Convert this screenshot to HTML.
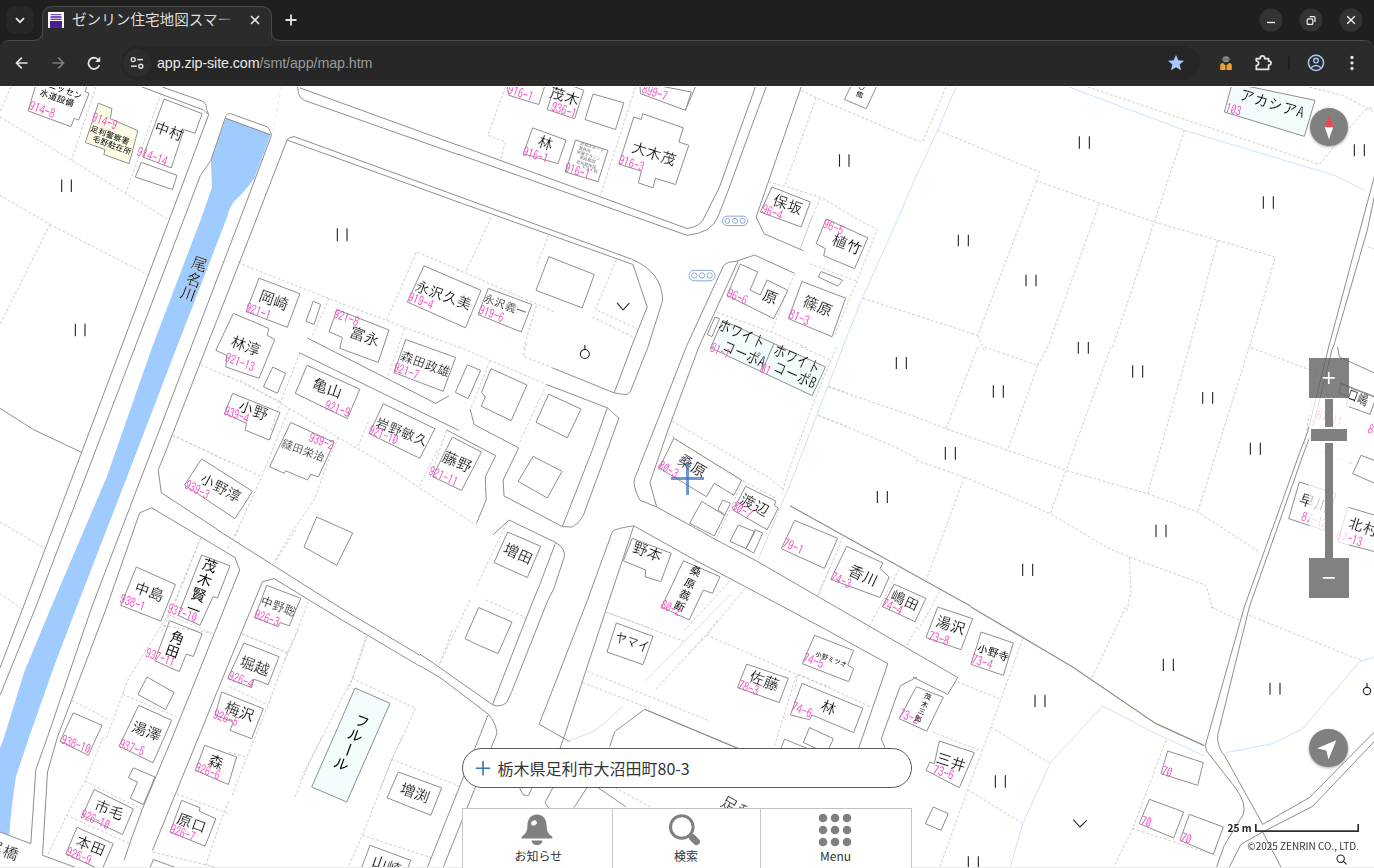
<!DOCTYPE html>
<html lang="ja">
<head>
<meta charset="utf-8">
<title>ゼンリン住宅地図スマートフォン</title>
<style>
html,body{margin:0;padding:0;}
body{width:1374px;height:868px;overflow:hidden;background:#fff;position:relative;font-family:"Liberation Sans","Noto Sans CJK JP",sans-serif;}
#chrome{position:absolute;left:0;top:0;width:1374px;height:86.3px;overflow:hidden;background:#1f1f1f;z-index:10;}
#toolbar{position:absolute;left:0;top:40px;width:1374px;height:47px;background:#2b2b2b;border-top-left-radius:9px;border-top-right-radius:9px;box-sizing:border-box;border-top:1px solid #4a4a4a;}
#tab{position:absolute;left:42px;top:6px;width:230px;height:35px;background:#2b2b2b;border-radius:10px 10px 0 0;box-sizing:border-box;border:1px solid #4a4a4a;border-bottom:none;}
#tabtitle{position:absolute;left:72px;top:10px;width:166px;height:22px;line-height:21px;font-size:14.6px;color:#dedede;white-space:nowrap;overflow:hidden;font-family:"Liberation Sans","Noto Sans CJK JP",sans-serif;}
#omni{position:absolute;left:121px;top:46px;width:1079px;height:34px;border-radius:17px;background:#262626;}
#url{position:absolute;left:157px;top:52px;height:22px;line-height:22px;font-size:14.3px;color:#e8e8e8;white-space:nowrap;letter-spacing:-0.1px;}
#url span{color:#9a9a9a;}
#map{position:absolute;left:0;top:87px;width:1374px;height:781px;overflow:hidden;background:#fff;}
#map svg{position:absolute;left:0;top:0;will-change:transform;}
.b{fill:none;stroke:#8e8e8e;stroke-width:1;vector-effect:non-scaling-stroke;stroke-linejoin:miter;}
.r{fill:none;stroke:#8e8e8e;stroke-width:1;vector-effect:non-scaling-stroke;}
.d{fill:none;stroke:#c4c4c4;stroke-width:0.85;stroke-dasharray:2.8 1.9;vector-effect:non-scaling-stroke;}
.w{fill:none;stroke:#cbe2fb;stroke-width:1;vector-effect:non-scaling-stroke;}
.n,.l{text-anchor:middle;dominant-baseline:central;}
.n{fill:#000;stroke:#fff;stroke-width:0.2;vector-effect:non-scaling-stroke;font-family:"IPAGothic","Noto Sans CJK JP",sans-serif;font-weight:normal;}
.l{fill:#f455c8;font-family:"IPAGothic","Liberation Sans",sans-serif;}
.f{stroke:#222;stroke-width:1.1;vector-effect:non-scaling-stroke;fill:none;}
.ui{position:absolute;z-index:5;}
</style>
</head>
<body>
<!--CHROME-->
<div id="chrome">
<div id="toolbar"></div>
<div id="tab"></div>
<div id="omni"></div>
<div id="tabtitle">ゼンリン住宅地図スマートフォン</div>
<div id="url">app.zip-site.com<span>/smt/app/map.htm</span></div>
<svg width="1374" height="87" style="position:absolute;left:0;top:0">
<!--CHROMEICONS-->
<!-- tab flare corners -->
<path d="M33 40.5 Q42.5 40.5 42.5 31 L42.5 41 Z" fill="#2b2b2b"/>
<path d="M33 40.5 Q42.5 40.5 42.5 31" fill="none" stroke="#4a4a4a" stroke-width="1"/>
<path d="M281 40.5 Q271.5 40.5 271.5 31 L271.5 41 Z" fill="#2b2b2b"/>
<path d="M281 40.5 Q271.5 40.5 271.5 31" fill="none" stroke="#4a4a4a" stroke-width="1"/>
<rect x="43" y="39" width="228" height="3" fill="#2b2b2b"/>
<!-- tab search button -->
<rect x="6.5" y="6.5" width="27" height="27" rx="8" fill="#272727"/>
<path d="M16 18.2 L20 22.2 L24 18.2" fill="none" stroke="#e6e6e6" stroke-width="1.8"/>
<!-- favicon -->
<rect x="48" y="12" width="16" height="16" fill="#fff"/>
<rect x="50" y="21" width="12" height="7" fill="#4a1d96"/>
<rect x="50.5" y="14" width="11" height="1.2" fill="#7a4fc0"/>
<rect x="50.5" y="16.2" width="11" height="1.6" fill="#5b2fa8"/>
<rect x="50.5" y="18.6" width="11" height="1.4" fill="#6a3fb4"/>
<!-- tab title fade -->
<defs><linearGradient id="fade" x1="0" x2="1" y1="0" y2="0"><stop offset="0" stop-color="#2b2b2b" stop-opacity="0"/><stop offset="1" stop-color="#2b2b2b" stop-opacity="1"/></linearGradient></defs>
<rect x="212" y="9" width="25" height="24" fill="url(#fade)"/><rect x="236.5" y="9" width="6" height="24" fill="#2b2b2b"/>
<!-- tab close -->
<path d="M251 16 L259 24 M259 16 L251 24" stroke="#e3e3e3" stroke-width="1.6" fill="none"/>
<!-- new tab -->
<path d="M285.5 20 H296.5 M291 14.5 V25.5" stroke="#e3e3e3" stroke-width="1.8" fill="none"/>
<!-- window controls -->
<circle cx="1271" cy="20" r="11.5" fill="#333"/>
<circle cx="1311" cy="20" r="11.5" fill="#333"/>
<circle cx="1351" cy="20" r="11.5" fill="#333"/>
<path d="M1267 22.5 H1275" stroke="#f0f0f0" stroke-width="1.3"/>
<rect x="1307.2" y="18.8" width="5.6" height="5.6" rx="1" fill="none" stroke="#f0f0f0" stroke-width="1.2"/>
<path d="M1309.6 16.6 H1313.8 Q1315 16.6 1315 17.8 V22" fill="none" stroke="#f0f0f0" stroke-width="1.2"/>
<path d="M1347.2 16.2 L1354.8 23.8 M1354.8 16.2 L1347.2 23.8" stroke="#f0f0f0" stroke-width="1.4"/>
<!-- nav -->
<path d="M27.6 63 H17 M21.8 57.7 L16.5 63 L21.8 68.3" fill="none" stroke="#e3e3e3" stroke-width="1.7"/>
<path d="M52.4 63 H63 M58.2 57.7 L63.5 63 L58.2 68.3" fill="none" stroke="#7b7b7b" stroke-width="1.7"/>
<path d="M99.3 61.5 A5.6 5.6 0 1 0 99.3 65.2" fill="none" stroke="#e3e3e3" stroke-width="1.8"/>
<path d="M100.2 56.8 V62 H95 Z" fill="#e3e3e3"/>
<!-- site info -->
<circle cx="137" cy="63" r="14" fill="#2d2d2d"/>
<circle cx="133.2" cy="59.6" r="2" fill="none" stroke="#e3e3e3" stroke-width="1.4"/>
<path d="M137.2 59.6 H143" stroke="#e3e3e3" stroke-width="1.5"/>
<circle cx="140.8" cy="66.2" r="2" fill="none" stroke="#e3e3e3" stroke-width="1.4"/>
<path d="M131 66.2 H136.8" stroke="#e3e3e3" stroke-width="1.5"/>
<!-- star -->
<path d="M1176 55 L1178.3 60.3 L1184 60.8 L1179.7 64.6 L1181 70.2 L1176 67.2 L1171 70.2 L1172.3 64.6 L1168 60.8 L1173.7 60.3 Z" fill="#a8c7fa"/>
<!-- extension icon (agent) -->
<ellipse cx="1226" cy="59.2" rx="3.4" ry="3" fill="#8a8a8a"/>
<rect x="1221.8" y="58.6" width="8.4" height="1.4" fill="#6f6f6f"/>
<path d="M1220.2 70 V65.5 Q1220.2 63 1223 63 L1226 66 L1229 63 Q1231.8 63 1231.8 65.5 V70 Z" fill="#f0a030"/>
<path d="M1226 66 V70" stroke="#2b2b2b" stroke-width="1"/>
<!-- puzzle -->
<path d="M1256.3 58.6 H1260.2 V58 A2.2 2.2 0 0 1 1264.6 58 V58.6 H1268.6 V61.2 H1269.2 A1.9 1.9 0 0 1 1269.2 65 H1268.6 V69.4 H1256.3 V65.6 A2.3 2.3 0 0 0 1256.3 61 Z" fill="none" stroke="#e9e9e9" stroke-width="1.7" stroke-linejoin="round"/>
<!-- separator -->
<path d="M1289 55.5 V70.5" stroke="#1a1a1a" stroke-width="1.2"/>
<!-- profile -->
<circle cx="1316" cy="62.8" r="7.6" fill="none" stroke="#a8c7fa" stroke-width="1.5"/>
<circle cx="1316" cy="60.6" r="2.3" fill="none" stroke="#a8c7fa" stroke-width="1.4"/>
<path d="M1310.8 68 Q1316 63.2 1321.2 68" fill="none" stroke="#a8c7fa" stroke-width="1.4"/>
<!-- menu dots -->
<circle cx="1352" cy="57.4" r="1.6" fill="#e9e9e9"/><circle cx="1352" cy="62.9" r="1.6" fill="#e9e9e9"/><circle cx="1352" cy="68.4" r="1.6" fill="#e9e9e9"/>
<!--/CHROMEICONS-->
</svg>
</div>
<!--MAP-->
<div id="map">
<svg width="1374" height="781" viewBox="0 87 1374 781">
<!--GLOBAL-->
<!-- river -->
<path d="M225.9 117.7 L270.8 134.6 L254.3 178.4 Q244 192 236 199.5 Q229.5 206 227.2 217 L176.9 347 L127 477 L76.7 607 L55 663.7 L29.2 737 L15.8 777 Q11 810 9.2 835.3 L0 832 L0 748 L4.2 737 L24.2 672 L51.2 607 L106.7 477 L152.2 347 L201.7 217 L212 187 L210.9 160.4 Z" fill="#a0cbfe"/>
<!-- river bank lines -->
<path class="r" d="M142 87 L203.5 110 L208.7 114.7 L170.3 217 L23.3 607 L0 667.8"/>
<path class="r" d="M162.2 87 L203.4 101.5 Q206.6 104 206.7 109.5 L208.7 114.7"/>
<path class="r" d="M225.9 116 L210.9 160.4 L200.4 175.4 L184.7 217 L35.8 607 L0 695.3"/>
<path class="r" d="M240.8 217 L91.8 607 L47.5 737 L35.8 769.5 L30.8 843.7 L0 832"/>
<path class="r" d="M257.2 217 L164.2 455.3 L158.3 469.5 L159.2 477 L161.3 492.8 L218.3 530"/>
<path class="r" d="M235 557.5 L151.7 507.8 L139.7 512.8 L106.7 607 L57.5 737 L47.5 772 L42.5 855.3 L110 880"/>
<path class="r" d="M240.8 217 L271.5 135.3"/>
<path class="r" d="M257.2 217 L287 140"/>
<g class="n" font-size="16">
<text transform="translate(201.3,258.7) rotate(20)" text-anchor="middle" dy="5.5">尾</text>
<text transform="translate(195.8,274.5) rotate(20)" text-anchor="middle" dy="5.5">名</text>
<text transform="translate(190.3,288.7) rotate(20)" text-anchor="middle" dy="5.5">川</text>
</g>
<!--/GLOBAL-->
<!--T00-->
<g transform="translate(0,87) scale(0.166667)">
<path class="d" d="M0 180 L430 440 L755 640 L1010 795"/>
<path class="d" d="M65 0 L0 150"/>
<path class="d" d="M575 0 L430 440"/>
<path class="d" d="M965 40 L755 640"/>
<path class="d" d="M0 650 L300 825"/>
<polygon class="b" points="215,-10 168,143 425,238 445,188 472,198 535,38 512,28 522,-10"/>
<polygon class="b" style="fill:#fdfde6" points="590,97 672,130 662,190 827,262 775,460 623,405 630,375 512,333"/>
<polygon class="b" points="985,72 1213,160 1170,278 1103,255 1028,485 857,420"/>
<polygon class="b" points="848,452 1062,530 1035,615 812,540"/>
<text class="n" style="stroke:none" font-size="54" transform="translate(392,20) rotate(20)">ニッセン</text>
<text class="n" style="stroke:none" font-size="54" transform="translate(343,64) rotate(20)">水道設備</text>
<text class="l" font-size="78" transform="translate(252,137) rotate(20)" textLength="161" lengthAdjust="spacingAndGlyphs">914-8</text>
<text class="l" font-size="78" transform="translate(627,207) rotate(20)" textLength="155" lengthAdjust="spacingAndGlyphs">914-9</text>
<text class="n" style="stroke:none" font-size="49" transform="translate(660,288) rotate(20)">足利警察署</text>
<text class="n" style="stroke:none" font-size="49" transform="translate(672,348) rotate(20)">毛野駐在所</text>
<text class="n" font-size="92" transform="translate(1015,265) rotate(20)">中村</text>
<text class="l" font-size="78" transform="translate(913,418) rotate(20)" textLength="189" lengthAdjust="spacingAndGlyphs">914-14</text>
<path class="f" d="M370 555 V630 M428 555 V630"/>
</g>
<g transform="translate(229,87) scale(0.166667)">
<path class="r" d="M410 -5 L418 40 Q425 68 452 80 L1380 407"/>
<path class="r" d="M425 5 L1380 352"/>
<path class="r" d="M348 318 Q352 305 390 297 L1380 657"/>
<path class="r" d="M348 318 L1380 692"/>
<path class="r" d="M-20 188 L250 287"/>
<path class="r" d="M-19 172 L-10 162 L10 160 L232 240 Q242 247 255 287"/>
<path class="w" style="stroke:#dcebfc" stroke-dasharray="4 3" d="M315 0 L262 270"/>
</g>
<!--/T00-->
<!--T10-->
<g transform="translate(458,87) scale(0.166667)">
<path class="r" d="M0 348 L1374 849"/>
<path class="r" d="M0 403 L1374 890"/>
<path class="d" d="M285 0 L180 290 L285 330 L255 435"/>
<path class="d" d="M1065 0 L855 650"/>
<polygon class="b" points="290,-30 305,50 485,105 525,-20"/>
<polygon class="b" points="585,-20 535,135 700,190 755,20 690,-5"/>
<polygon class="b" points="810,42 995,95 945,255 762,195"/>
<polygon class="b" points="448,245 648,318 600,460 392,400"/>
<polygon class="b" points="705,318 900,380 840,568 645,510"/>
<polygon class="b" points="1055,180 1100,195 1108,160 1352,245 1325,330 1385,350 1305,585 1185,548 1170,605 1082,575 1100,505 965,462"/>
<polygon class="b" points="1090,-30 1095,40 1365,140 1400,30"/>
<text class="l" font-size="78" transform="translate(375,38) rotate(18)" textLength="155" lengthAdjust="spacingAndGlyphs">916-1</text>
<text class="n" font-size="92" transform="translate(640,55) rotate(18)">茂木</text>
<text class="l" font-size="78" transform="translate(635,140) rotate(18)" textLength="155" lengthAdjust="spacingAndGlyphs">936-1</text>
<text class="n" font-size="92" transform="translate(525,335) rotate(18)">林</text>
<text class="l" font-size="78" transform="translate(465,410) rotate(18)" textLength="155" lengthAdjust="spacingAndGlyphs">916-1</text>
<g class="n" font-size="25" style="fill:#555">
<text transform="translate(805,356) rotate(18)">足利スポーツ</text>
<text transform="translate(762,372) rotate(18)">整体院</text>
<text transform="translate(785,408) rotate(18)">学習マラソン</text>
<text transform="translate(778,432) rotate(18)">家庭教師</text>
<text transform="translate(770,462) rotate(18)">足利整体院</text>
<text transform="translate(790,490) rotate(18)">トライ個</text>
</g>
<text class="l" font-size="78" transform="translate(715,505) rotate(18)" textLength="155" lengthAdjust="spacingAndGlyphs">916-1</text>
<text class="n" font-size="92" transform="translate(1175,400) rotate(18)">大木茂</text>
<text class="l" font-size="78" transform="translate(1040,460) rotate(18)" textLength="155" lengthAdjust="spacingAndGlyphs">916-3</text>
<text class="l" font-size="78" transform="translate(1180,35) rotate(18)" textLength="155" lengthAdjust="spacingAndGlyphs">899-7</text>
</g>
<g transform="translate(458,217) scale(0.166667)">
<path class="r" d="M0 -125 L1040 252 Q1225 330 1228 500 L1140 780 L1035 1045 Q1020 1072 995 1065 L936 1055"/>
<path class="r" d="M0 -90 L1050 285 L1135 540 L1040 780 L960 995 L936 1055"/>
<path class="d" d="M200 0 L45 330"/>
<path class="d" d="M-10 317 L45 335 L575 568"/>
<path class="d" d="M545 105 L470 295"/>
<path class="d" d="M950 255 L825 555 L1075 670"/>
<path class="d" d="M805 600 L1050 720"/>
<path class="d" d="M470 530 L390 800"/>
<polygon class="b" points="545,238 818,345 745,545 468,440"/>
<polygon class="b" points="182,428 443,525 380,690 120,585"/>
<polygon class="b" points="-204,293 138,440 45,665 -304,510"/>
<path class="f" d="M955 515 L990 558 L1028 517"/>
<text class="n" font-size="68" transform="translate(285,528) rotate(20)">永沢義一</text>
<text class="l" font-size="78" transform="translate(200,582) rotate(20)" textLength="155" lengthAdjust="spacingAndGlyphs">919-6</text>
<text class="n" font-size="88" transform="translate(-87,468) rotate(20)">永沢久美</text>
</g>
<g transform="translate(687,87) scale(0.166667)">
<path class="r" d="M50 0 L-10 140"/>
<path class="r" d="M410 0 L195 600 L105 780 Q85 838 0 849"/>
<path class="r" d="M475 0 L335 380 L240 640 L185 780 Q150 875 0 890"/>
<path class="r" d="M685 0 L415 780 L462 880 L700 983"/>
<path class="d" d="M685 20 L775 65 L1380 322"/>
<path class="d" d="M775 65 L585 595"/>
<path class="d" d="M490 570 L585 595 L810 665 L1000 780 L1140 855 L1020 1165 L880 1500"/>
<path class="d" d="M800 665 L750 780 L680 970"/>
<polygon class="b" points="995,-30 945,75 1075,130 1145,-20"/>
<polygon class="b" points="510,600 740,690 685,840 440,750"/>
<path class="f" d="M915 403 V478 M972 403 V478"/>
<path class="w" d="M1380 520 L1270 780 L1050 1270 L935 1560"/>
<text class="n" style="stroke:none" font-size="42" transform="translate(1048,0) rotate(18)">〇</text>
<text class="n" style="stroke:none" font-size="42" transform="translate(1035,45) rotate(18)">館</text>
<text class="n" font-size="92" transform="translate(605,705) rotate(20)">保坂</text>
<text class="l" font-size="78" transform="translate(510,752) rotate(20)" textLength="128" lengthAdjust="spacingAndGlyphs">96-4</text>
</g>
<g transform="translate(687,217) scale(0.166667)">
<g fill="none" stroke="#8ea6d8" stroke-width="1" style="vector-effect:non-scaling-stroke">
<rect x="212" y="-5" width="153" height="56" rx="28" vector-effect="non-scaling-stroke"/>
<circle cx="242" cy="23" r="15" vector-effect="non-scaling-stroke"/><circle cx="288" cy="23" r="15" vector-effect="non-scaling-stroke"/><circle cx="334" cy="23" r="15" vector-effect="non-scaling-stroke"/>
<rect x="12" y="320" width="156" height="63" rx="31" vector-effect="non-scaling-stroke"/>
<circle cx="44" cy="351" r="16" vector-effect="non-scaling-stroke"/><circle cx="90" cy="351" r="16" vector-effect="non-scaling-stroke"/><circle cx="136" cy="351" r="16" vector-effect="non-scaling-stroke"/>
</g>
<path class="r" d="M-4 778 L218 295 Q228 278 250 272 L300 265 L405 228 L645 338"/>
<path class="r" d="M305 268 L71 780"/>
<path class="d" d="M750 0 L680 190"/>
<path class="d" d="M735 280 L1020 385"/>
<path class="d" d="M645 340 L505 690"/>
<path class="d" d="M180 572 L505 690 L720 785"/>
<path class="d" d="M1055 487 L1380 592"/>
<polygon class="b" points="320,283 425,330 378,438 440,468 480,378 605,440 520,610 240,470"/>
<polygon class="b" points="690,387 952,487 870,718 608,610"/>
<polygon class="b" points="805,327 935,380 905,415 788,360"/>
<polygon class="b" points="835,12 1085,125 1005,310 820,232 830,190 775,160"/>
<polygon class="b" points="168,600 195,610 150,718 122,705"/>
<text class="n" font-size="92" transform="translate(500,480) rotate(22)">原</text>
<text class="l" font-size="78" transform="translate(300,480) rotate(24)" textLength="128" lengthAdjust="spacingAndGlyphs">96-6</text>
<text class="n" font-size="92" transform="translate(785,535) rotate(22)">篠原</text>
<text class="l" font-size="78" transform="translate(672,605) rotate(22)" textLength="128" lengthAdjust="spacingAndGlyphs">81-3</text>
<text class="n" font-size="92" transform="translate(960,165) rotate(22)">植竹</text>
<text class="l" font-size="78" transform="translate(878,62) rotate(22)" textLength="128" lengthAdjust="spacingAndGlyphs">96-5</text>
</g>
<!--/T10-->
<!--T20-->
<g transform="translate(916,87) scale(0.333333)">
<path class="w" d="M120 0 L65 130 L0 270"/>
<path class="w" d="M460 0 L805 130 L1255 265 L1345 310"/>
<path class="d" d="M90 0 L20 165 L0 160"/>
<path class="d" d="M65 130 L370 255 L362 282 L715 405 L1078 510 L1000 780"/>
<path class="d" d="M362 282 L185 745 L0 685"/>
<path class="d" d="M185 745 L205 790"/>
<path class="d" d="M550 350 L395 780"/>
<path class="d" d="M805 130 L715 405 L590 780"/>
<path class="d" d="M905 460 L820 780"/>
<path class="d" d="M515 0 L1210 232 L1345 70 L1380 58"/>
<path class="d" d="M1180 0 L1280 25 L1380 78"/>
<path class="d" d="M1355 480 L1380 486"/>
<polygon class="b" style="fill:#f2fcfc" points="958,-10 1197,40 1165,148 925,75 948,-10"/>
<text class="n" font-size="46" transform="translate(1068,50) rotate(17)" textLength="200" lengthAdjust="spacingAndGlyphs">アカシアA</text>
<text class="l" font-size="39" transform="translate(952,68) rotate(17)" textLength="48" lengthAdjust="spacingAndGlyphs">103</text>
<path class="f" d="M490 148 V185 M520 148 V185 M1042 328 V365 M1072 328 V365 M1315 172 V208 M1345 172 V208 M127 443 V478 M157 443 V478 M330 563 V598 M360 563 V598 M487 765 V800 M517 765 V800"/>
<path class="r" d="M1380 250 L1238 780"/>
<path class="r" d="M1380 305 L1354 429 L1252 780"/>
</g>
<!--/T20-->
<!--T01-->
<g transform="translate(60,217) scale(0.166667)">
<path class="d" d="M-60 45 L525 345"/>
<path class="d" d="M-60 45 L-360 645"/>
<path class="f" d="M92 640 V715 M150 640 V715"/>
</g>
<g transform="translate(229,217) scale(0.166667)">
<path class="f" d="M650 68 V145 M708 68 V145"/>
<path class="d" d="M55 275 L600 490 L945 620 L1060 665 L1380 782"/>
<path class="d" d="M1380 317 L1125 210 L945 620"/>
<path class="d" d="M600 490 L495 725"/>
<polygon class="b" points="180,367 425,460 350,662 103,568"/>
<polygon class="b" points="505,505 550,525 510,645 462,625"/>
<text class="n" font-size="92" transform="translate(270,500) rotate(20)">岡崎</text>
<text class="l" font-size="78" transform="translate(1150,505) rotate(20)" textLength="155" lengthAdjust="spacingAndGlyphs">919-4</text>
<text class="l" font-size="78" transform="translate(175,568) rotate(20)" textLength="155" lengthAdjust="spacingAndGlyphs">921-1</text>
</g>
<g transform="translate(229,300) scale(0.166667)">
<polygon class="b" points="26,80 238,170 230,212 275,237 180,470 -19,402 -14,332 -79,302"/>
<polygon class="b" points="262,403 340,440 290,560 207,520"/>
<polygon class="b" points="648,58 960,180 895,375 665,290 680,225 600,190"/>
<polygon class="b" points="1060,237 1360,345 1285,548 990,435"/>
<polygon class="b" points="468,392 785,535 710,712 398,560"/>
<path class="r" d="M470 228 L1240 620 L1320 575"/>
<path class="r" d="M420 315 L1380 783"/>
<path class="d" d="M425 320 L310 610 L250 790"/>
<path class="d" d="M-10 455 L310 610"/>
<path class="d" d="M1055 170 L950 465"/>
<text class="n" font-size="92" transform="translate(100,275) rotate(20)">林淳</text>
<text class="l" font-size="78" transform="translate(65,375) rotate(20)" textLength="183" lengthAdjust="spacingAndGlyphs">921-13</text>
<text class="l" font-size="78" transform="translate(703,108) rotate(20)" textLength="155" lengthAdjust="spacingAndGlyphs">921-8</text>
<text class="n" font-size="92" transform="translate(815,220) rotate(20)">富永</text>
<text class="n" font-size="78" transform="translate(1178,385) rotate(20)">森田政雄</text>
<text class="l" font-size="78" transform="translate(1063,428) rotate(20)" textLength="155" lengthAdjust="spacingAndGlyphs">921-7</text>
<text class="n" font-size="92" transform="translate(590,530) rotate(20)">亀山</text>
<text class="l" font-size="78" transform="translate(650,655) rotate(20)" textLength="155" lengthAdjust="spacingAndGlyphs">921-9</text>
</g>
<g transform="translate(0,347) scale(0.166667)">
<path class="r" d="M0 368 L200 495 L495 635"/>
<path class="d" d="M1205 108 L1380 182"/>
<path class="d" d="M1035 528 L1380 692"/>
</g>
<g transform="translate(0,477) scale(0.166667)">
<path class="d" d="M0 270 L270 430"/>
<path class="d" d="M0 700 L130 790"/>
<path class="d" d="M1205 365 L1040 780"/>
<polygon class="b" points="818,540 1053,645 965,865 725,770"/>
<text class="n" font-size="92" transform="translate(895,688) rotate(20)">中島</text>
<text class="l" font-size="78" transform="translate(795,755) rotate(20)" textLength="155" lengthAdjust="spacingAndGlyphs">938-1</text>
</g>
<g transform="translate(160,400) scale(0.166667)">
<path class="d" d="M75 212 L610 460"/>
<path class="d" d="M775 50 L610 460 L465 780 L400 900"/>
<path class="d" d="M480 -120 L775 50 L1070 225 L1380 402"/>
<path class="d" d="M1070 225 L1010 360 L925 600 L800 780 L690 960"/>
<path class="d" d="M1250 130 L1185 285"/>
<polygon class="b" points="436,-40 720,75 655,240 510,180 520,140 388,80"/>
<polygon class="b" points="785,135 1045,255 950,462 905,445 885,480 755,425 745,440 657,400"/>
<polygon class="b" points="250,353 555,548 450,712 147,510"/>
<text class="n" font-size="92" transform="translate(560,62) rotate(20)">小野</text>
<text class="l" font-size="78" transform="translate(458,90) rotate(20)" textLength="155" lengthAdjust="spacingAndGlyphs">939-4</text>
<text class="n" font-size="68" transform="translate(860,300) rotate(20)">縫田栄治</text>
<text class="l" font-size="78" transform="translate(968,250) rotate(20)" textLength="155" lengthAdjust="spacingAndGlyphs">939-2</text>
<text class="n" font-size="88" transform="translate(365,525) rotate(28)">小野淳</text>
<text class="l" font-size="78" transform="translate(222,540) rotate(28)" textLength="155" lengthAdjust="spacingAndGlyphs">939-3</text>
</g>
<!--/T01-->
<!--T11-->
<g transform="translate(389,347) scale(0.166667)">
<path class="r" d="M487 372 L510 465 L778 605"/>
<path class="r" d="M980 125 L1350 275"/>
<path class="r" d="M945 225 L1310 365 L1380 428"/>
<path class="r" d="M1310 365 L1220 618"/>
<path class="r" d="M1380 425 L1310 618"/>
<path class="d" d="M420 0 L945 225"/>
<path class="d" d="M825 -20 L805 55 L980 125"/>
<path class="d" d="M605 85 L490 370"/>
<path class="d" d="M945 225 L775 590"/>
<path class="d" d="M345 500 L240 800"/>
<polygon class="b" points="470,107 550,140 475,310 398,272"/>
<polygon class="b" points="612,130 828,228 733,442 553,355 578,300 555,272"/>
<polygon class="b" points="958,283 1152,372 1070,545 882,452"/>
<polygon class="b" points="-34,340 275,490 185,668 -119,520"/>
<circle class="f" cx="1175" cy="42" r="27"/><path class="f" d="M1175 15 V-12"/>
<text class="n" font-size="82" transform="translate(76,508) rotate(22)">岩野敏久</text>
<text class="l" font-size="78" transform="translate(-34,530) rotate(22)" textLength="183" lengthAdjust="spacingAndGlyphs">921-10</text>
</g>
<g transform="translate(389,450) scale(0.166667)">
<path class="r" d="M345 -121 L640 34 L578 160 L583 300 L525 440"/>
<path class="r" d="M778 -13 L685 180 L690 275 L1040 460 L1100 462 Q1140 440 1165 395 L1310 0"/>
<path class="r" d="M1220 0 L1040 460"/>
<path class="r" d="M625 508 L720 420 L1000 555 Q1060 590 1052 640 L990 830"/>
<path class="r" d="M1000 555 L900 820"/>
<path class="d" d="M0 105 L180 225 L535 460"/>
<path class="d" d="M290 0 L180 225"/>
<path class="d" d="M705 440 L530 810"/>
<polygon class="b" points="380,-78 555,12 435,243 262,160"/>
<polygon class="b" points="865,38 1038,128 950,288 775,188"/>
<polygon class="b" points="712,492 910,578 830,765 630,675"/>
<text class="n" font-size="92" transform="translate(410,70) rotate(24)">藤野</text>
<text class="l" font-size="78" transform="translate(325,160) rotate(24)" textLength="183" lengthAdjust="spacingAndGlyphs">921-11</text>
<text class="n" font-size="92" transform="translate(775,622) rotate(24)">増田</text>
</g>
<g transform="translate(618,347) scale(0.166667)">
<polygon class="b" style="fill:#f2fcfc" points="629,-160 1245,120 1165,292 555,5"/>
<path class="r" d="M935,-20 L862,150"/>
<text class="n" font-size="96" transform="translate(744,-80) rotate(24)" textLength="300" lengthAdjust="spacingAndGlyphs">ホワイト</text>
<text class="n" font-size="96" transform="translate(758,42) rotate(24)" textLength="270" lengthAdjust="spacingAndGlyphs">コーポA</text>
<text class="n" font-size="96" transform="translate(1075,72) rotate(24)" textLength="300" lengthAdjust="spacingAndGlyphs">ホワイト</text>
<text class="n" font-size="96" transform="translate(1062,168) rotate(24)" textLength="270" lengthAdjust="spacingAndGlyphs">コーポB</text>
<text class="l" font-size="78" transform="translate(612,25) rotate(24)" textLength="122" lengthAdjust="spacingAndGlyphs">81-1</text>
<text class="l" font-size="78" transform="translate(885,138) rotate(24)" textLength="61" lengthAdjust="spacingAndGlyphs">81</text>
<path class="d" d="M1100 0 L1270 75"/>
<path class="d" d="M1310 0 L1190 290 L1010 780 L985 880"/>
<path class="d" d="M325 445 L900 780 L990 853"/>
<path class="d" d="M300 520 L700 780 L950 908"/>
<path class="d" d="M1265 235 L1380 277"/>
<path class="d" d="M1200 410 L1380 477"/>
<path class="w" d="M1350 0 L1050 780 L840 1278"/>
</g>
<g transform="translate(618,430) scale(0.166667)">
<path class="r" d="M410 -500 L215 0 L100 290 Q85 330 130 420 L232 462 L430 570 L590 660 L830 785 L2042 1487"/>
<path class="r" d="M485 -498 L300 0 L192 315 L232 462"/>
<path class="d" d="M755 300 L590 650"/>
<polygon class="b" points="335,50 742,300 695,392 578,320 530,400 248,228"/>
<polygon class="b" points="503,428 640,512 578,635 430,560"/>
<polygon class="b" points="628,420 675,440 640,510 600,478"/>
<polygon class="b" points="765,338 945,425 940,455 962,468 895,598 692,482"/>
<polygon class="b" points="722,570 822,610 768,712 672,668"/>
<polygon class="b" points="822,598 868,618 815,738 768,712"/>
<polygon class="b" points="1060,542 1318,650 1238,830 980,712"/>
<text class="n" font-size="92" transform="translate(445,215) rotate(30)">桑原</text>
<text class="l" font-size="78" transform="translate(300,238) rotate(30)" textLength="128" lengthAdjust="spacingAndGlyphs">80-3</text>
<text class="n" font-size="92" transform="translate(820,450) rotate(28)">渡辺</text>
<text class="l" font-size="78" transform="translate(745,482) rotate(28)" textLength="128" lengthAdjust="spacingAndGlyphs">80-7</text>
<text class="l" font-size="78" transform="translate(1050,700) rotate(24)" textLength="128" lengthAdjust="spacingAndGlyphs">79-1</text>
</g>
<g transform="translate(780,500) scale(0.166667)">
<path class="r" style="stroke-width:1.15" d="M60 35 L1146 638"/>
<path class="r" d="M-20 620 L280 780 L647 982 L472 1490"/>
<path class="d" d="M380 215 L225 585"/>
<path class="d" d="M715 415 L525 780"/>
<path class="d" d="M960 548 L830 780"/>
<polygon class="b" points="400,278 618,378 600,412 655,462 600,585 305,476"/>
<polygon class="b" points="685,505 875,590 810,730 615,640"/>
<text class="n" font-size="92" transform="translate(500,455) rotate(25)">香川</text>
<text class="l" font-size="78" transform="translate(365,482) rotate(25)" textLength="128" lengthAdjust="spacingAndGlyphs">74-3</text>
<text class="n" font-size="88" transform="translate(750,602) rotate(25)">嶋田</text>
<text class="l" font-size="78" transform="translate(672,642) rotate(25)" textLength="128" lengthAdjust="spacingAndGlyphs">74-4</text>
</g>
<g transform="translate(458,347) scale(0.333333)">
<path class="d" d="M1110 120 L1380 212"/>
<path class="d" d="M1080 205 L1290 290 L1380 335"/>
<path class="f" d="M1315 30 V66 M1345 30 V66 M1258 432 V468 M1288 432 V468"/>
</g>
<!--/T11-->
<!--T21-->
<g transform="translate(916,347) scale(0.333333)">
<path class="d" d="M205 0 L365 55 L395 0"/>
<path class="d" d="M185 0 L90 245"/>
<path class="d" d="M365 55 L275 310"/>
<path class="d" d="M585 0 L450 370 L403 500"/>
<path class="d" d="M820 0 L695 440"/>
<path class="d" d="M1185 70 L1000 0 L845 495"/>
<path class="d" d="M0 210 L90 245 L275 310 L450 370 L695 440 L845 495 L1030 615"/>
<path class="d" d="M0 340 L145 390 L403 500 L570 600 L640 630 L870 715 L892 790"/>
<path class="d" d="M145 390 L30 700"/>
<path class="d" d="M640 630 L645 735 L633 790"/>
<path class="d" d="M1200 75 L1165 295 L1310 350"/>
<path class="f" d="M650 55 V92 M680 55 V92 M232 115 V152 M262 115 V152 M860 135 V170 M890 135 V170 M88 300 V338 M118 300 V338 M1003 287 V323 M1033 287 V323 M720 533 V570 M750 533 V570 M320 650 V687 M350 650 V687"/>
<path class="r" d="M1238 0 L1175 255 L1150 320 L985 780"/>
<path class="r" d="M1250 0 L1186 258 L1161 324 L1000 780"/>
<path class="r" d="M1265 0 L1270 30 L1380 80"/>
<path class="r" d="M1272 108 L1380 150"/>
<polygon class="b" points="1275,112 1380,152 1362,202 1290,176 1298,150 1268,138"/>
<polygon class="b" points="1335,325 1400,350 1390,415 1310,380"/>
<polygon class="b" points="1150,405 1260,440 1225,550 1118,515"/>
<polygon class="b" points="1295,480 1400,512 1380,615 1265,585"/>
<text class="n" font-size="44" transform="translate(1326,151) rotate(20)" textLength="64" lengthAdjust="spacingAndGlyphs">口嶋</text>
<text class="l" font-size="39" transform="translate(1240,215) rotate(18)" textLength="80" lengthAdjust="spacingAndGlyphs">87-11</text>
<text class="l" font-size="39" transform="translate(1372,250) rotate(18)" textLength="32" lengthAdjust="spacingAndGlyphs">87</text>
<text class="n" font-size="46" transform="translate(1195,468) rotate(18)">早川</text>
<text class="l" font-size="39" transform="translate(1195,520) rotate(18)" textLength="80" lengthAdjust="spacingAndGlyphs">87-12</text>
<text class="n" font-size="46" transform="translate(1342,540) rotate(18)">北村</text>
<text class="l" font-size="39" transform="translate(1300,575) rotate(18)" textLength="80" lengthAdjust="spacingAndGlyphs">87-13</text>
</g>
<!--/T21-->
<!--T02-->
<g transform="translate(160,530) scale(0.166667)">
<path class="r" d="M345 0 L1080 465 L1560 752"/>
<path class="r" d="M450 165 L478 240 L262 780 L75 1242 L-105 1672 L-175 1862 L-215 1980"/>
<path class="r" d="M-45 1922 L420 780 L615 310 L685 292 L1080 533 L1560 818"/>
<path class="d" d="M470 0 L445 50"/>
<path class="d" d="M815 0 L680 210"/>
<path class="d" d="M245 45 L60 500 L10 610"/>
<path class="d" d="M20 575 L310 618"/>
<path class="d" d="M490 620 L770 740"/>
<path class="d" d="M890 430 L770 740 L745 790"/>
<path class="d" d="M1245 630 L1195 780 L1130 960"/>
<polygon class="b" points="250,150 420,215 345,408 318,400 240,572 108,512"/>
<polygon class="b" points="640,332 845,410 775,575 720,555 710,580 568,525"/>
<polygon class="b" points="940,-78 1156,18 1060,212 864,102"/>
<g class="n" font-size="90">
<text transform="translate(300,212) rotate(20)">茂</text>
<text transform="translate(268,300) rotate(20)">木</text>
<text transform="translate(232,390) rotate(20)">賢</text>
<text transform="translate(200,480) rotate(20)">一</text>
</g>
<text class="l" font-size="78" transform="translate(132,500) rotate(20)" textLength="183" lengthAdjust="spacingAndGlyphs">937-10</text>
<text class="n" font-size="74" transform="translate(712,455) rotate(20)">中野聡</text>
<text class="l" font-size="78" transform="translate(640,530) rotate(20)" textLength="155" lengthAdjust="spacingAndGlyphs">926-3</text>
</g>
<g transform="translate(229,630) scale(0.166667)">
<path class="d" d="M80 25 L350 135 L415 0"/>
<path class="d" d="M350 135 L235 450 L100 780 L20 990"/>
<path class="d" d="M0 340 L235 450"/>
<path class="d" d="M0 735 L110 762"/>
<path class="d" d="M825 35 L740 290 L490 780 L395 1000"/>
<path class="d" d="M740 290 L1120 470 L975 780 L905 960"/>
<path class="d" d="M1340 0 L1265 200"/>
<polygon class="b" style="fill:#f2fcfc" points="756,348 966,440 706,1032 496,942"/>
<polygon class="b" points="90,78 300,160 235,328 150,295 135,345 -8,290"/>
<polygon class="b" points="-44,372 206,472 136,652 6,602 26,552 -84,512"/>
<g class="n" font-size="92">
<text transform="translate(800,548) rotate(20)">フ</text>
<text transform="translate(758,633) rotate(20)">ル</text>
<text transform="translate(717,718) rotate(110)">ー</text>
<text transform="translate(676,803) rotate(20)">ル</text>
</g>
<text class="n" font-size="92" transform="translate(155,215) rotate(20)">堀越</text>
<text class="l" font-size="78" transform="translate(70,300) rotate(20)" textLength="155" lengthAdjust="spacingAndGlyphs">926-4</text>
<text class="n" font-size="92" transform="translate(65,490) rotate(20)">梅沢</text>
<text class="l" font-size="78" transform="translate(-20,530) rotate(20)" textLength="155" lengthAdjust="spacingAndGlyphs">926-5</text>
</g>
<g transform="translate(0,607) scale(0.166667)">
<path class="d" d="M1010 45 L1275 160"/>
<path class="d" d="M1010 45 L770 430 L735 525 L640 780 L620 800"/>
<path class="d" d="M735 525 L1075 665"/>
<path class="d" d="M430 560 L660 680"/>
<polygon class="b" points="1018,82 1213,160 1160,297 1118,282 1075,388 928,322"/>
<polygon class="b" points="882,420 1045,513 993,615 828,525"/>
<polygon class="b" points="832,590 1030,680 918,935 715,835"/>
<polygon class="b" points="440,635 612,710 530,890 360,805"/>
<g class="n" font-size="88">
<text transform="translate(1065,185) rotate(20)">角</text>
<text transform="translate(1035,265) rotate(20)">田</text>
</g>
<text class="l" font-size="78" transform="translate(960,305) rotate(20)" textLength="183" lengthAdjust="spacingAndGlyphs">937-11</text>
<text class="n" font-size="92" transform="translate(880,745) rotate(20)">湯澤</text>
<text class="l" font-size="78" transform="translate(790,845) rotate(20)" textLength="155" lengthAdjust="spacingAndGlyphs">937-5</text>
<text class="l" font-size="78" transform="translate(455,825) rotate(20)" textLength="183" lengthAdjust="spacingAndGlyphs">938-10</text>
</g>
<g transform="translate(0,737) scale(0.166667)">
<path class="d" d="M620 0 L510 265 L400 470 L280 720"/>
<path class="d" d="M510 265 L855 435"/>
<path class="d" d="M400 470 L780 640"/>
<path class="d" d="M1060 340 L1380 462"/>
<path class="d" d="M1374 385 L1340 460 L1230 780"/>
<path class="d" d="M915 690 L1380 802"/>
<polygon class="b" points="800,185 930,240 860,405 782,368 825,270 770,245"/>
<polygon class="b" points="565,315 800,432 735,585 495,470"/>
<polygon class="b" points="462,542 680,640 610,800 395,700"/>
<polygon class="b" points="1228,50 1420,120 1370,285 1172,200"/>
<polygon class="b" points="1090,380 1200,425 1195,445 1295,490 1230,655 1020,570"/>
<path class="r" d="M870 860 L920 735 L1380 902"/>
<text class="n" font-size="92" transform="translate(655,438) rotate(22)">市毛</text>
<text class="l" font-size="78" transform="translate(570,497) rotate(24)" textLength="183" lengthAdjust="spacingAndGlyphs">926-10</text>
<text class="n" font-size="92" transform="translate(545,652) rotate(22)">本田</text>
<text class="l" font-size="78" transform="translate(472,715) rotate(22)" textLength="155" lengthAdjust="spacingAndGlyphs">926-9</text>
<text class="n" font-size="92" transform="translate(1295,150) rotate(20)">森</text>
<text class="l" font-size="78" transform="translate(1245,207) rotate(20)" textLength="155" lengthAdjust="spacingAndGlyphs">926-6</text>
<text class="n" font-size="92" transform="translate(1150,517) rotate(20)">原口</text>
<text class="l" font-size="78" transform="translate(1095,577) rotate(20)" textLength="155" lengthAdjust="spacingAndGlyphs">926-7</text>
<text class="n" font-size="92" transform="translate(65,695) rotate(20)">橋</text>
<text class="n" font-size="92" transform="translate(-28,660) rotate(20)">尾</text>
</g>
<!--/T02-->
<!--T12-->
<g transform="translate(420,600) scale(0.166667)">
<path class="r" d="M804 -70 L768 0 L548 555 L520 615 Q480 648 435 628 L60 365 L0 325"/>
<path class="r" d="M714 -80 L680 0 L435 628"/>
<path class="r" d="M0 395 L120 465 L410 685 Q455 735 462 800"/>
<path class="r" d="M408 690 L365 800"/>
<path class="r" d="M1155 -412 L1005 0 L715 745 L775 780 L900 850"/>
<path class="r" d="M1135 0 L875 790 L805 990"/>
<path class="r" d="M1920 897 L1348 656 L1168 790 L1138 880"/>
<path class="d" d="M300 0 L115 390"/>
<path class="d" d="M395 0 L635 105"/>
<path class="d" d="M1110 70 L1380 167"/>
<path class="d" d="M1005 428 L1728 722"/>
<path class="d" d="M975 495 L1380 652"/>
<path class="w" d="M1215 640 L1100 745 L1040 790 L880 850"/>
<polygon class="b" points="352,45 552,132 468,322 350,270 270,232"/>
</g>
<g transform="translate(600,560) scale(0.166667)">
<path class="r" d="M203 -205 L570 0 L1060 260"/>
<path class="r" d="M75 -172 Q95 -190 203 -205 L135 0 L55 240"/>
<path class="d" d="M40 315 L500 485"/>
<path class="d" d="M785 120 L495 435"/>
<path class="d" d="M870 170 L640 450 L330 780"/>
<path class="d" d="M640 450 L1185 690 L1170 780"/>
<path class="d" d="M1185 690 L1380 762"/>
<path class="d" d="M1380 45 L1300 225"/>
<path class="w" d="M785 205 L270 730"/>
<polygon class="b" points="193,-130 428,-40 365,130 270,100 275,60 140,5"/>
<polygon class="b" points="500,5 720,100 675,200 620,180 535,360 370,282"/>
<polygon class="b" points="98,378 318,458 258,628 42,552"/>
<polygon class="b" points="880,625 1130,710 1075,855 825,765"/>
<polygon class="b" points="1287,452 1522,543 1487,630 1522,652 1492,730 1214,622"/>
<text class="n" font-size="92" transform="translate(285,-50) rotate(20)">野本</text>
<g class="n" font-size="68">
<text transform="translate(575,65) rotate(25)">桑</text>
<text transform="translate(542,138) rotate(25)">原</text>
<text transform="translate(510,208) rotate(25)">裁</text>
<text transform="translate(480,275) rotate(25)">断</text>
</g>
<text class="l" font-size="78" transform="translate(425,290) rotate(25)" textLength="128" lengthAdjust="spacingAndGlyphs">80-2</text>
<text class="n" font-size="88" transform="translate(195,492) rotate(20)" textLength="220" lengthAdjust="spacingAndGlyphs">ヤマイ</text>
<text class="n" font-size="92" transform="translate(985,725) rotate(20)">佐藤</text>
<text class="l" font-size="78" transform="translate(890,768) rotate(20)" textLength="128" lengthAdjust="spacingAndGlyphs">78-3</text>
<text class="n" style="stroke:none" font-size="40" transform="translate(1387,595) rotate(20)">小野ミツオ</text>
<text class="l" font-size="78" transform="translate(1280,605) rotate(20)" textLength="128" lengthAdjust="spacingAndGlyphs">74-5</text>
</g>
<g transform="translate(687,620) scale(0.166667)">
<path class="r" d="M1380 342 L1280 395 L1165 715 L1190 770 L1260 900"/>
<path class="d" d="M185 0 L115 90 L0 210"/>
<path class="d" d="M670 325 L1100 520"/>
<path class="d" d="M655 335 L520 770"/>
<path class="d" d="M1380 40 L1310 170"/>
<polygon class="b" points="690,380 1055,530 1000,675 750,570 735,598 620,570"/>
<polygon class="b" points="735,645 878,712 840,800 698,735"/>
<polygon class="b" points="585,715 720,770 700,830 560,780"/>
<text class="n" font-size="92" transform="translate(850,525) rotate(22)">林</text>
<text class="l" font-size="78" transform="translate(688,540) rotate(22)" textLength="128" lengthAdjust="spacingAndGlyphs">74-6</text>
</g>
<g transform="translate(300,737) scale(0.166667)">
<path class="d" d="M615 0 L550 135 L375 590 L290 780"/>
<path class="d" d="M550 135 L955 295"/>
<path class="d" d="M375 590 L790 725"/>
<path class="d" d="M130 0 L0 260"/>
<path class="r" d="M1085 -22 L765 780"/>
<path class="r" d="M1182 -22 L860 780"/>
<polygon class="b" points="590,210 850,305 785,470 522,365"/>
<polygon class="b" points="420,650 665,740 600,900 360,810"/>
<text class="n" font-size="92" transform="translate(690,335) rotate(20)">増渕</text>
<text class="n" font-size="92" transform="translate(520,772) rotate(20)">山崎</text>
</g>
<!--/T12-->
<!--T22-->
<g transform="translate(916,607) scale(0.333333)">
<path class="r" d="M985 0 L868 415 L872 432 L960 545 Q992 590 982 622 L925 715 L898 790"/>
<path class="r" d="M1000 0 L905 385 Q903 420 925 445 L1040 652 L1180 572 L1380 370"/>
<path class="r" d="M1040 675 L1190 598 L1380 398"/>
<path class="r" d="M1040 675 L1100 790"/>
<path class="r" d="M1040 675 L975 712 L935 790"/>
<path class="r" style="stroke-width:1.2" d="M165 0 L470 180 L720 350 L865 416"/>
<path class="w" d="M280 790 L320 650 L405 465 L560 297 L720 380 L865 447"/>
<path class="w" d="M930 437 L1070 410 L1160 365 L1330 165 L1380 148"/>
<path class="d" d="M630 0 L525 218"/>
<path class="d" d="M885 0 L970 40"/>
<path class="d" d="M1000 25 L1335 160"/>
<path class="d" d="M320 95 L225 360 L155 548 L68 790"/>
<path class="d" d="M125 225 L250 275"/>
<path class="d" d="M225 360 L400 468"/>
<path class="d" d="M155 548 L320 650"/>
<path class="d" d="M750 400 L650 665 L588 790"/>
<path class="d" d="M650 665 L900 745"/>
<path class="d" d="M50 375 L190 430"/>
<path class="r" d="M125 212 L95 262 L-10 210"/>
<polygon class="b" points="65,0 170,35 135,128 30,92"/>
<polygon class="b" points="195,75 292,108 262,205 165,172 176,135 182,120"/>
<polygon class="b" points="70,402 175,437 130,542 30,490 42,465 55,470"/>
<polygon class="b" points="52,600 97,620 75,670 28,650"/>
<polygon class="b" points="755,432 862,467 845,535 735,500"/>
<polygon class="b" points="700,577 803,615 773,693 670,650"/>
<polygon class="b" points="820,622 922,660 892,742 792,700"/>
<text class="n" font-size="46" transform="translate(105,55) rotate(18)">湯沢</text>
<text class="l" font-size="39" transform="translate(68,95) rotate(18)" textLength="64" lengthAdjust="spacingAndGlyphs">73-8</text>
<text class="n" style="stroke:none" font-size="33" transform="translate(232,135) rotate(18)">小野寺</text>
<text class="l" font-size="39" transform="translate(198,165) rotate(18)" textLength="64" lengthAdjust="spacingAndGlyphs">73-4</text>
<text class="n" font-size="46" transform="translate(105,465) rotate(18)">三井</text>
<text class="l" font-size="39" transform="translate(82,497) rotate(18)" textLength="64" lengthAdjust="spacingAndGlyphs">73-6</text>
<text class="l" font-size="39" transform="translate(752,495) rotate(18)" textLength="32" lengthAdjust="spacingAndGlyphs">70</text>
<text class="l" font-size="39" transform="translate(690,645) rotate(18)" textLength="32" lengthAdjust="spacingAndGlyphs">70</text>
<text class="l" font-size="39" transform="translate(810,695) rotate(18)" textLength="32" lengthAdjust="spacingAndGlyphs">70</text>
<path class="f" d="M742 155 V192 M772 155 V192 M357 263 V300 M387 263 V300 M1062 227 V263 M1092 227 V263 M238 505 V542 M268 505 V542 M157 748 V785 M187 748 V785"/>
<path class="f" d="M472 638 L492 660 L512 640"/>
<circle class="f" cx="1353" cy="252" r="11"/><path class="f" d="M1353 241 V228"/>
<circle class="f" cx="1274" cy="755" r="11"/><path class="f" d="M1282 763 L1292 772"/>
</g>
<!--/T22-->
<!--MAPTOP-->
<path class="r" d="M586.9 787.8 L573.8 807.9"/>
<path class="r" d="M598.2 787.8 L626.2 807"/>
<path class="r" d="M552.8 787.8 L545 802.6 L548.5 807.9"/>
<path class="r" d="M519.6 787.8 L523.1 794.8 L528.4 795.7 L531.9 787.8"/>
<path class="r" d="M644.7 709.3 L740 749"/>
<path class="d" d="M615 787.5 L652 808"/>
<text class="n" font-size="17" transform="translate(737,808) rotate(30)" style="fill:#333">足利</text>
<polygon class="b" points="916.3,686.7 943.3,697.2 926.8,731.1 899.3,718.8"/>
<text class="l" font-size="13" transform="translate(908.8,716.7) rotate(22)" textLength="21" lengthAdjust="spacingAndGlyphs">73-2</text>
<g class="n" style="stroke:none" font-size="7.5"><text transform="translate(927.7,696.3) rotate(20)">茂</text><text transform="translate(924.7,704.1) rotate(20)">木</text><text transform="translate(921.7,711.3) rotate(20)">三</text><text transform="translate(918.4,718.8) rotate(20)">郎</text></g>
<!--/MAPTOP-->
</svg>
</div>
<div id="bottomline" style="position:absolute;left:0;top:867px;width:1374px;height:1px;background:#ececec;z-index:4"></div>
<!--OVERLAYS-->
<!-- crosshair -->
<div class="ui" style="left:671.3px;top:477.3px;width:32.6px;height:2.4px;background:rgba(70,115,190,0.75)"></div>
<div class="ui" style="left:686.4px;top:462.3px;width:2.4px;height:32.6px;background:rgba(70,115,190,0.75)"></div>
<!-- compass -->
<div class="ui" style="left:1309.5px;top:107.7px;width:38px;height:38px;border-radius:50%;background:#808080;box-shadow:0 1px 3px rgba(0,0,0,0.35)">
<svg width="38" height="38" viewBox="0 0 38 38" style="position:absolute;left:0;top:0"><path d="M19 7.2 L23.2 19.2 H14.8 Z" fill="#f14850"/><path d="M19 31.2 L23.2 19.2 H14.8 Z" fill="#fff"/></svg>
</div>
<!-- zoom control -->
<div class="ui" style="left:1309px;top:397.7px;width:40px;height:160.5px;background:rgba(255,255,255,0.72)"></div>
<div class="ui" style="left:1309.3px;top:358px;width:39.5px;height:39.7px;background:rgba(98,98,98,0.8)">
<svg width="40" height="40" style="position:absolute;left:0;top:0"><path d="M13.8 19.9 H25.8 M19.8 13.9 V25.9" stroke="#fff" stroke-width="1.7" fill="none"/></svg></div>
<div class="ui" style="left:1309.3px;top:558.2px;width:39.5px;height:39.7px;background:rgba(98,98,98,0.8)">
<svg width="40" height="40" style="position:absolute;left:0;top:0"><path d="M13.8 19.9 H25.8" stroke="#fff" stroke-width="1.7" fill="none"/></svg></div>
<div class="ui" style="left:1325.3px;top:399.3px;width:7.5px;height:158.3px;background:#808080"></div>
<div class="ui" style="left:1309.5px;top:427.2px;width:39px;height:15.6px;background:#fff"></div>
<div class="ui" style="left:1311.3px;top:429px;width:35.5px;height:12px;background:#808080"></div>
<!-- locate -->
<div class="ui" style="left:1309px;top:728.7px;width:38.6px;height:38.6px;border-radius:50%;background:#808080;box-shadow:0 1px 3px rgba(0,0,0,0.35)">
<svg width="39" height="39" viewBox="0 0 39 39" style="position:absolute;left:0;top:0"><path d="M27.3 11.3 L8.2 19.2 L17.2 21.4 L19.6 30.5 Z" fill="#fff"/></svg>
</div>
<!-- scale -->
<div class="ui" style="left:1227.5px;top:820px;width:26px;height:16px;line-height:16px;font-size:10.2px;font-weight:bold;color:#222;font-family:'Noto Sans CJK JP','Liberation Sans',sans-serif;white-space:nowrap">25 m</div>
<svg class="ui" width="110" height="12" style="left:1252px;top:821px"><path d="M3.8 3 V10.2 H106.2 V3" fill="none" stroke="#2e2e2e" stroke-width="1.7"/></svg>
<div class="ui" style="left:1247px;top:838px;width:112px;height:16px;line-height:16px;font-size:10px;color:#333;font-family:'Noto Sans CJK JP','Liberation Sans',sans-serif;white-space:nowrap;text-align:right">©2025 ZENRIN CO., LTD.</div>
<!-- address bar -->
<div class="ui" style="left:462px;top:748px;width:449.5px;height:39.5px;box-sizing:border-box;border:1px solid #5a5a5a;border-radius:20px;background:#fff">
<svg width="20" height="20" style="position:absolute;left:9.7px;top:9.1px"><path d="M2.8 10.3 H17.2 M10 3.1 V17.5" stroke="#3d72b8" stroke-width="1.6" fill="none"/></svg>
<div style="position:absolute;left:34.5px;top:7px;height:24px;line-height:24px;font-size:16px;color:#333;font-family:'Noto Sans CJK JP','Liberation Sans',sans-serif;white-space:nowrap">栃木県足利市大沼田町80-3</div>
</div>
<!-- bottom panel -->
<div class="ui" style="left:462px;top:807.9px;width:449.5px;height:62px;box-sizing:border-box;border:1.8px solid #c2c2c2;background:#fff;font-family:'Noto Sans CJK JP','Liberation Sans',sans-serif;font-size:12px;color:#333">
<div style="position:absolute;left:148.6px;top:0;width:1.3px;height:62px;background:#c4c4c4"></div>
<div style="position:absolute;left:296.8px;top:0;width:1.3px;height:62px;background:#c4c4c4"></div>
<svg width="449" height="60" style="position:absolute;left:-1.8px;top:-1.7px">
<!-- bell -->
<path d="M76 7.4 C69.5 7.4 66.4 12.6 66.4 18.6 C66.4 24.5 64.6 27.2 60.6 29.8 V31.4 H91.4 V29.8 C87.4 27.2 85.6 24.5 85.6 18.6 C85.6 12.6 82.5 7.4 76 7.4 Z" fill="#808080"/>
<path d="M70.5 33.6 H81.5 A5.5 4.6 0 0 1 70.5 33.6 Z" fill="#808080"/>
<ellipse cx="73" cy="16" rx="2.9" ry="2.4" transform="rotate(-30 73 16)" fill="#fff"/>
<!-- search -->
<circle cx="220.8" cy="20" r="11.3" fill="none" stroke="#808080" stroke-width="3"/>
<path d="M231.6 30.8 L235.4 34.6" stroke="#808080" stroke-width="7" stroke-linecap="round"/>
<!-- menu dots -->
<g fill="#808080"><circle cx="362" cy="11" r="4.3"/><circle cx="374" cy="11" r="4.3"/><circle cx="386" cy="11" r="4.3"/><circle cx="362" cy="23" r="4.3"/><circle cx="374" cy="23" r="4.3"/><circle cx="386" cy="23" r="4.3"/><circle cx="362" cy="35" r="4.3"/><circle cx="374" cy="35" r="4.3"/><circle cx="386" cy="35" r="4.3"/></g>
</svg>
<div style="position:absolute;left:1px;top:38.2px;width:149px;text-align:center;line-height:18px">お知らせ</div>
<div style="position:absolute;left:149px;top:38.5px;width:148px;text-align:center;line-height:18px">検索</div>
<div style="position:absolute;left:298px;top:38.5px;width:149px;text-align:center;line-height:18px">Menu</div>
</div>
<!--/OVERLAYS-->
</body>
</html>
